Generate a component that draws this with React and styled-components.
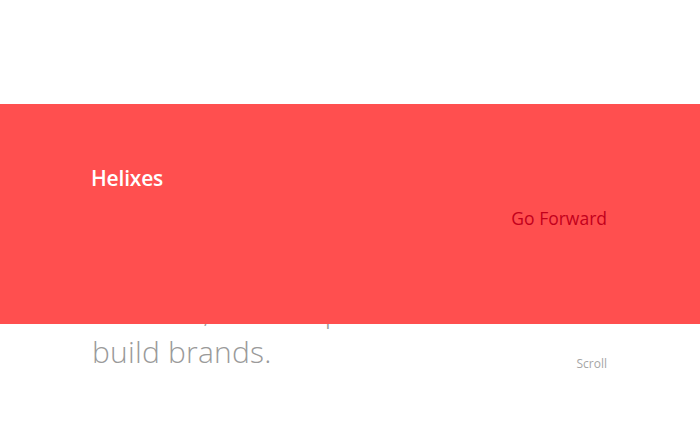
import styled, { createGlobalStyle } from "styled-components";

const GlobalStyle = createGlobalStyle`
  html, body {
    margin: 0;
    padding: 0;
    background: #ffffff;
  }

  body {
    font-family: "Open Sans", "Liberation Sans", sans-serif;
    -webkit-font-smoothing: antialiased;
  }
`;

const Page = styled.div`
  position: relative;
  width: 100%;
  height: 437px;
  overflow: hidden;
`;

const Intro = styled.section`
  display: flex;
  flex-direction: column;
  padding: 290px 93px 0 92px;
`;

const Heading = styled.h1`
  margin: 0;
  font-size: 30px;
  font-weight: 300;
  line-height: 41px;
  color: #9a9a9a;
  letter-spacing: 0.2px;
`;

const BottomRow = styled.div`
  display: flex;
  justify-content: space-between;
  align-items: flex-end;
`;

const ScrollHint = styled.span`
  font-size: 12px;
  color: #a6a6a6;
`;

const Banner = styled.section`
  position: absolute;
  top: 104px;
  left: 0;
  right: 0;
  height: 220px;
  background: #ff4f4f;
  box-sizing: border-box;
  padding: 60px 93px 0 91px;
  display: grid;
  grid-template-columns: 1fr auto;
  align-content: start;
  row-gap: 14px;
`;

const Brand = styled.div`
  grid-column: 1;
  font-size: 21px;
  font-weight: 600;
  color: #ffffff;
  letter-spacing: -0.2px;
`;

const ForwardLink = styled.a`
  grid-column: 2;
  grid-row: 2;
  font-size: 17.5px;
  font-weight: 400;
  color: #c3001c;
  text-decoration: none;
  cursor: pointer;
`;

export default function App() {
  return (
    <>
      <GlobalStyle />
      <Page>
        <Intro>
          <Heading>Creative, we’ll help</Heading>
          <BottomRow>
            <Heading as="div">build brands.</Heading>
            <ScrollHint>Scroll</ScrollHint>
          </BottomRow>
        </Intro>
        <Banner>
          <Brand>Helixes</Brand>
          <ForwardLink>Go Forward</ForwardLink>
        </Banner>
      </Page>
    </>
  );
}
